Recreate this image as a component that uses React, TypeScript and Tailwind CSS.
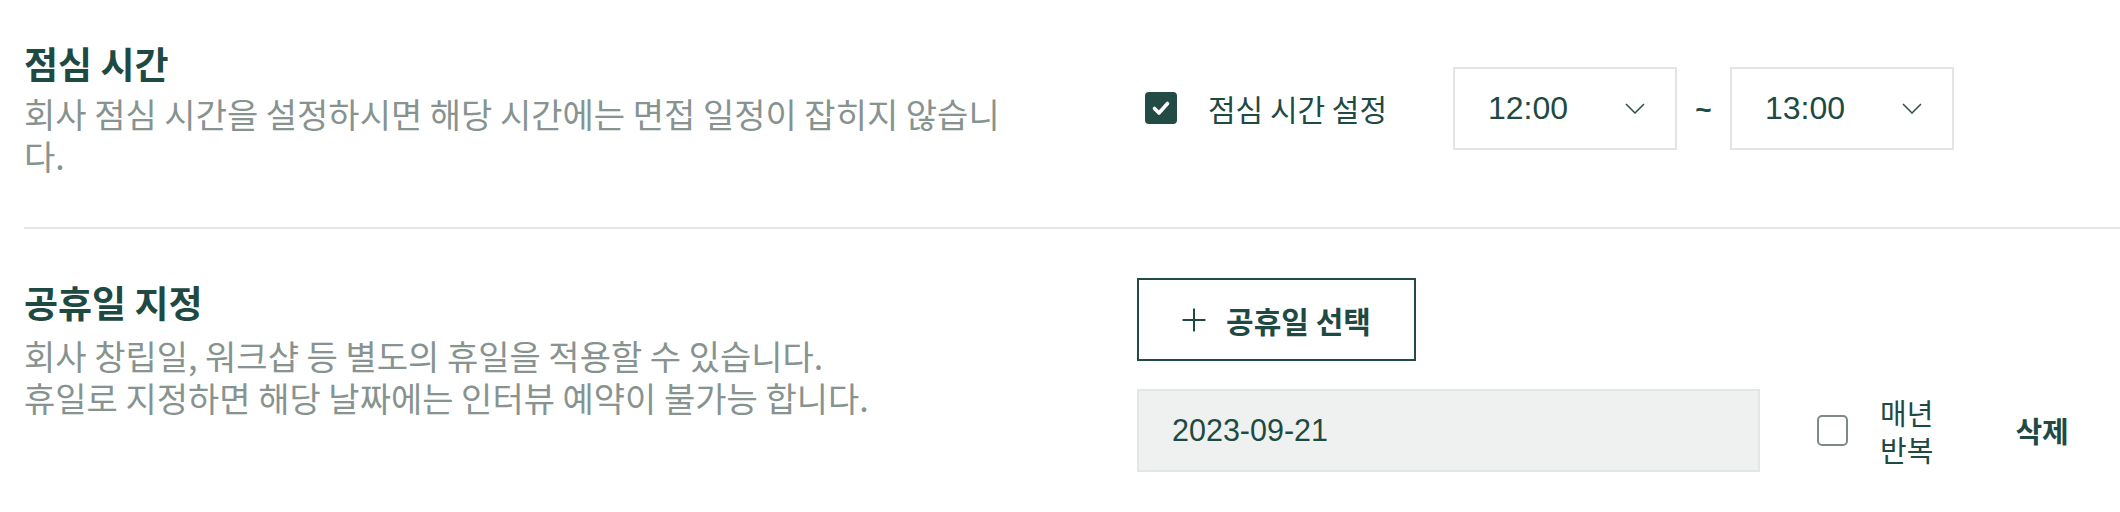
import React from "react";

const KR = { fontFamily: '"Noto Sans CJK KR", "Noto Sans", sans-serif' };

function Chevron() {
  return (
    <svg width="20" height="11" viewBox="0 0 20 11" fill="none">
      <polyline points="1,1 10,10 19,1" stroke="#2a4f49" strokeWidth="1.5" fill="none" />
    </svg>
  );
}

function TimeSelect({ value }: { value: string }) {
  return (
    <div className="w-[224px] h-[83px] border-2 border-[#e1e5e4] bg-white flex items-center justify-between pl-[33px] pr-[30px]">
      <span className="text-[32px] text-[#1e4a43] font-['Liberation_Sans',Arial,sans-serif]">{value}</span>
      <Chevron />
    </div>
  );
}

export default function App() {
  return (
    <div className="w-[2120px] h-[512px] bg-white pl-[24px] overflow-hidden" style={KR}>
      {/* Section 1 */}
      <section className="flex items-center pt-[39px] pb-[50px] border-b-2 border-[#e3e7e6]">
        <div className="w-[1113px] shrink-0">
          <h2 className="text-[37px] leading-[48px] font-bold text-[#1e4a43]">점심 시간</h2>
          <p className="w-[995px] mt-[6px] text-[34px] leading-[42px] text-[#87938f]">
            회사 점심 시간을 설정하시면 해당 시간에는 면접 일정이 잡히지 않습니다.
          </p>
        </div>
        <div className="flex items-center">
          <label className="w-[316px] flex items-center">
            <span className="ml-[8px] w-[32px] h-[32px] rounded-[4px] bg-[#224b45] flex items-center justify-center">
              <svg width="32" height="32" viewBox="0 0 32 32" fill="none">
                <path d="M9.5 16.5 L14 21 L22.5 11.5" stroke="white" strokeWidth="3.6" strokeLinecap="round" strokeLinejoin="round" fill="none" />
              </svg>
            </span>
            <span className="ml-[31px] text-[30px] leading-[40px] text-[#1e4a43]">점심 시간 설정</span>
          </label>
          <TimeSelect value="12:00" />
          <div className="w-[53px] flex justify-center pt-[4px]">
            <span className="text-[28px] font-bold text-[#1e4a43] font-['Liberation_Sans',Arial,sans-serif]">~</span>
          </div>
          <TimeSelect value="13:00" />
        </div>
      </section>

      {/* Section 2 */}
      <section className="flex items-start pt-[49px]">
        <div className="w-[1113px] shrink-0">
          <h2 className="text-[37px] leading-[48px] font-bold text-[#1e4a43]">공휴일 지정</h2>
          <p className="mt-[9px] text-[34px] leading-[42px] text-[#87938f]">
            회사 창립일, 워크샵 등 별도의 휴일을 적용할 수 있습니다.
            <br />
            휴일로 지정하면 해당 날짜에는 인터뷰 예약이 불가능 합니다.
          </p>
        </div>
        <div className="flex flex-col">
          <button className="w-[279px] h-[83px] border-2 border-[#224b45] bg-white flex items-center justify-center gap-[20px]">
            <svg width="24" height="24" viewBox="0 0 24 24" fill="none">
              <line x1="12" y1="0.5" x2="12" y2="23.5" stroke="#1e4a43" strokeWidth="2" />
              <line x1="0.5" y1="12" x2="23.5" y2="12" stroke="#1e4a43" strokeWidth="2" />
            </svg>
            <span className="text-[30px] font-bold text-[#1e4a43] leading-[40px]">공휴일 선택</span>
          </button>
          <div className="mt-[28px] flex items-center">
            <div className="w-[623px] h-[83px] bg-[#eff1f0] border-2 border-[#e3e6e5] flex items-center pl-[33px]">
              <span className="text-[30.5px] text-[#1e4a43] font-['Liberation_Sans',Arial,sans-serif]">2023-09-21</span>
            </div>
            <span className="ml-[57px] w-[31px] h-[31px] border-2 border-[#7f8986] rounded-[5px] bg-white" />
            <span className="ml-[32px] flex flex-col text-[29px] leading-[37px] text-[#1e4a43]">
              <span>매년</span>
              <span>반복</span>
            </span>
            <span className="ml-[82px] text-[29px] font-bold text-[#1e4a43]">삭제</span>
          </div>
        </div>
      </section>
    </div>
  );
}
